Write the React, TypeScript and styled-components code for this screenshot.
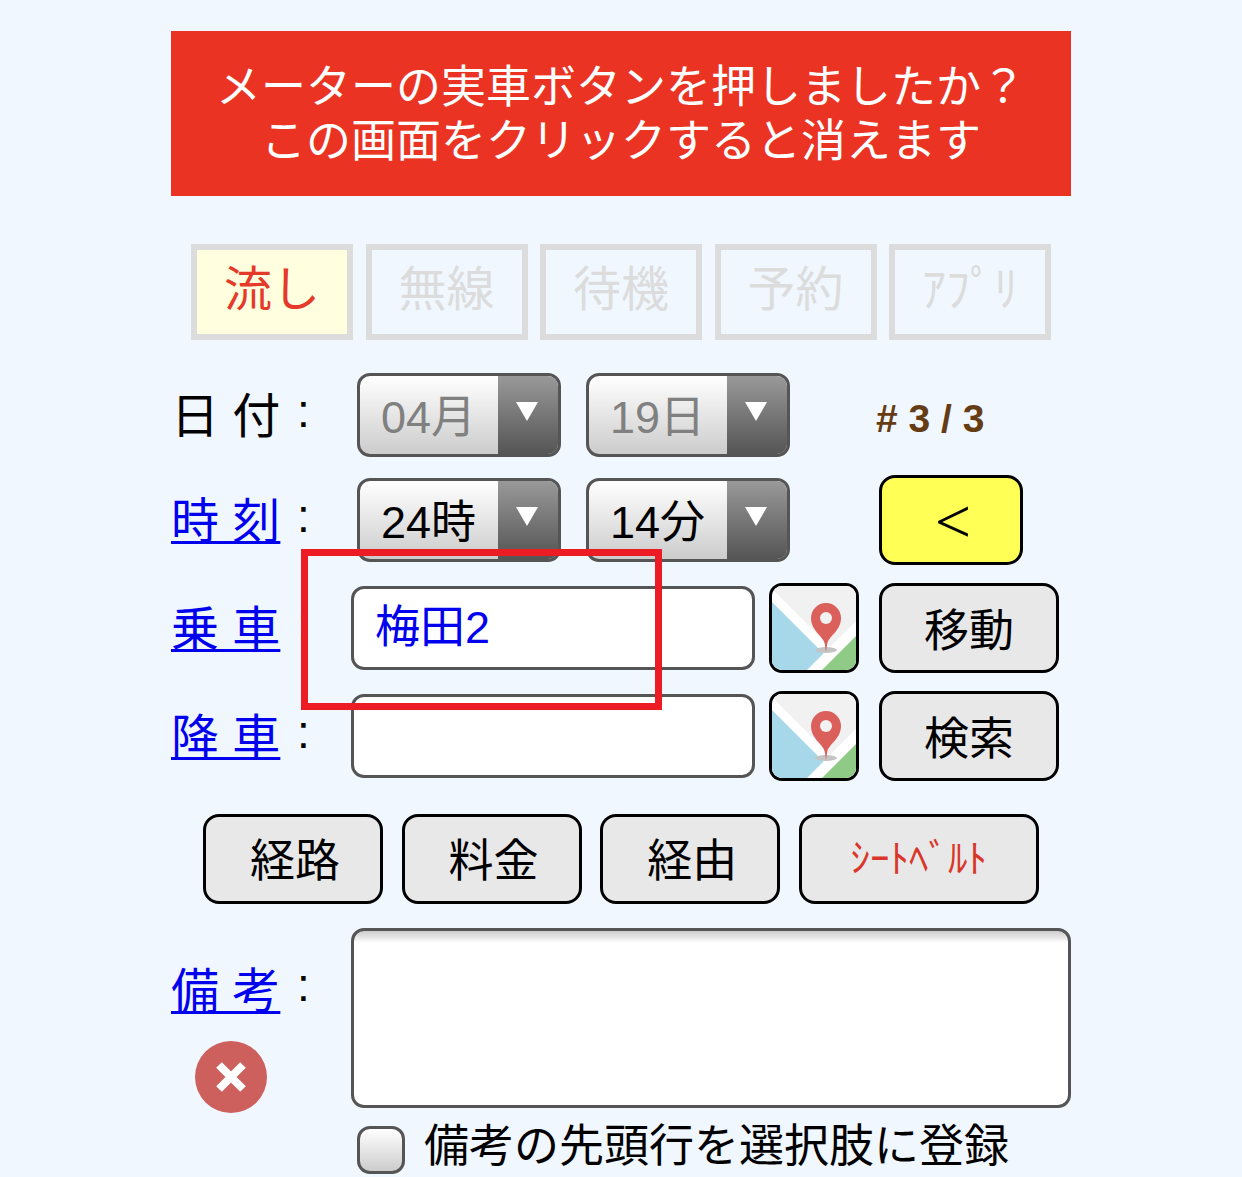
import styled, { createGlobalStyle } from "styled-components";

const GlobalStyle = createGlobalStyle`
  html, body {
    margin: 0;
    padding: 0;
    background: #f0f7ff;
    overflow: hidden;
  }
  * {
    box-sizing: border-box;
  }
`;

const Page = styled.div`
  position: relative;
  width: 1242px;
  height: 1177px;
  overflow: hidden;
  background: #f0f7ff;
  padding: 31px 171px 0;
  font-family: "Liberation Sans", "Noto Sans CJK JP", sans-serif;
  color: #000;
`;

const Banner = styled.div`
  width: 900px;
  height: 165px;
  padding-top: 2px;
  background: #eb3323;
  color: #fff;
  font-size: 45px;
  line-height: 54px;
  text-align: center;
  display: flex;
  flex-direction: column;
  justify-content: center;
`;

const TabRow = styled.div`
  display: flex;
  gap: 12.5px;
  margin: 48px 0 33px 20px;
`;

const Tab = styled.div<{ $active?: boolean }>`
  width: 162px;
  height: 96px;
  border: 6px solid #dcdcdc;
  padding-bottom: 14px;
  background: ${({ $active }) => ($active ? "#ffffe0" : "transparent")};
  color: ${({ $active }) => ($active ? "#e5392a" : "#dcdcdc")};
  font-size: 48px;
  display: flex;
  align-items: center;
  justify-content: center;
`;

const Rows = styled.div`
  display: flex;
  flex-direction: column;
  gap: 18px;
`;

const Row = styled.div<{ $height: number }>`
  display: flex;
  align-items: center;
  height: ${({ $height }) => $height}px;
`;

const Label = styled.div`
  width: 180px;
  flex-shrink: 0;
  padding-top: 4px;
  font-size: 48px;
  line-height: 56px;
  white-space: nowrap;
  display: flex;
  align-items: center;
`;

const LabelText = styled.span<{ $link?: boolean }>`
  display: inline-block;
  width: 109px;
  color: ${({ $link }) => ($link ? "#0000ee" : "#000")};
  text-decoration: ${({ $link }) => ($link ? "underline" : "none")};
  text-decoration-thickness: 3px;
  text-underline-offset: 3px;
`;

const Colon = styled.span`
  margin: 0 0 13px 17px;
  font-size: 46px;
  line-height: 1;
`;

const Select = styled.div<{ $muted?: boolean }>`
  position: relative;
  width: 204px;
  height: 84px;
  border: 3px solid #555;
  border-radius: 13px;
  overflow: hidden;
  background: linear-gradient(#fff, #ccc);
  color: ${({ $muted }) => ($muted ? "#808080" : "#000")};
  font-size: 45px;
  padding: 0 0 4px 21px;
  display: flex;
  align-items: center;
`;

const SelectArrow = styled.div`
  position: absolute;
  top: 0;
  right: 0;
  bottom: 0;
  width: 60px;
  background: linear-gradient(#999, #555);
  display: flex;
  justify-content: center;
  padding: 26px 2px 0 0;

  &::after {
    content: "";
    width: 0;
    height: 0;
    border-left: 11px solid transparent;
    border-right: 11px solid transparent;
    border-top: 19px solid #fff;
  }
`;

const SelectGroup = styled.div`
  display: flex;
  gap: 25px;
  margin-left: 6px;
`;

const Counter = styled.div`
  margin: 8px 0 0 86px;
  color: #663c14;
  font-size: 39px;
  font-weight: bold;
`;

const BackButton = styled.div`
  width: 144px;
  height: 90px;
  margin-left: 89px;
  padding-left: 4px;
  background: #ffff55;
  border: 3px solid #000;
  border-radius: 16px;
  font-family: "Noto Sans", sans-serif;
  font-weight: 300;
  font-size: 64px;
  display: flex;
  align-items: center;
  justify-content: center;
`;

const TextField = styled.div`
  width: 404px;
  height: 84px;
  border: 3px solid #555;
  border-radius: 13px;
  background: #fff;
  color: #0000ee;
  font-size: 45px;
  padding: 0 0 10px 21px;
  display: flex;
  align-items: center;
`;

const MapButton = styled.div`
  width: 90px;
  height: 90px;
  margin-left: 14px;
  border: 3px solid #000;
  border-radius: 13px;
  overflow: hidden;

  svg {
    display: block;
    width: 84px;
    height: 84px;
  }
`;

const ActionButton = styled.div<{ $width?: number; $red?: boolean }>`
  width: ${({ $width }) => $width ?? 180}px;
  height: 90px;
  flex-shrink: 0;
  border: 3px solid #000;
  border-radius: 16px;
  padding-bottom: 2px;
  background: #e8e8e8;
  color: ${({ $red }) => ($red ? "#d9372a" : "#000")};
  font-size: ${({ $red }) => ($red ? "39px" : "45px")};
  display: flex;
  align-items: center;
  justify-content: center;
`;

const SideButton = styled(ActionButton)`
  margin-left: 20px;
`;

const RouteButton = styled(ActionButton)<{ $red?: boolean }>`
  padding: 0 0 ${({ $red }) => ($red ? "8px" : "4px")} ${({ $red }) => ($red ? "0" : "4px")};
`;

const ButtonRow = styled.div`
  display: flex;
  gap: 18.6px;
  margin: 33px 0 24px 32px;
`;

const NotesRow = styled.div`
  display: flex;
  height: 180px;
`;

const NotesLabel = styled.div`
  width: 180px;
  flex-shrink: 0;
  padding-top: 30px;
`;

const ClearIcon = styled.div`
  width: 72px;
  height: 72px;
  margin: 20px 0 0 24px;
  border-radius: 50%;
  background: #cd5f5c;
  display: flex;
  align-items: center;
  justify-content: center;
`;

const TextArea = styled.div`
  width: 720px;
  height: 180px;
  border: 3px solid #555;
  border-radius: 13px;
  background: linear-gradient(#ccc, #fff 12px);
`;

const CheckRow = styled.div`
  display: flex;
  align-items: flex-start;
  gap: 19px;
  margin: 18px 0 0 186px;
  font-size: 45px;
  white-space: nowrap;
`;

const CheckBox = styled.div`
  width: 48px;
  height: 48px;
  border: 3px solid #555;
  border-radius: 13px;
  background: linear-gradient(#fff, #ccc);
`;

const CheckText = styled.span`
  line-height: 48px;
  margin-top: -3px;
`;

const RedFrame = styled.div`
  position: absolute;
  left: 301px;
  top: 549px;
  width: 361px;
  height: 161px;
  border: 7px solid #ed1c24;
`;

const MapIcon = () => (
  <svg viewBox="0 0 84 84">
    <rect width="84" height="84" fill="#fff" />
    <polygon points="0,0 84,0 84,35 58,61 0,3" fill="#f1f1f1" />
    <polygon points="0,16 51.5,67.5 35,84 0,84" fill="#a6d8e9" />
    <polygon points="84,50 84,84 50,84" fill="#8fcb86" />
    <ellipse cx="54" cy="64" rx="11" ry="3" fill="#c4c4c4" />
    <path
      d="M54 66L52.8 58C51.5 50 39 45 39 32a15 15 0 0 1 30 0C69 45 56.5 50 55.2 58Z"
      fill="#db5f5a"
    />
    <circle cx="54" cy="32" r="6" fill="#f1f1f1" />
  </svg>
);

const ClearGlyph = () => (
  <svg width="34" height="34" viewBox="0 0 34 34">
    <path d="M5 5L29 29M29 5L5 29" stroke="#fff" strokeWidth="8" />
  </svg>
);

const App = () => {
  return (
    <Page>
      <GlobalStyle />
      <Banner>
        <div>メーターの実車ボタンを押しましたか？</div>
        <div>この画面をクリックすると消えます</div>
      </Banner>

      <TabRow>
        <Tab $active>流し</Tab>
        <Tab>無線</Tab>
        <Tab>待機</Tab>
        <Tab>予約</Tab>
        <Tab>ｱﾌﾟﾘ</Tab>
      </TabRow>

      <Rows>
        <Row $height={84}>
          <Label>
            <LabelText>日 付</LabelText>
            <Colon>:</Colon>
          </Label>
          <SelectGroup>
            <Select $muted>
              04月
              <SelectArrow />
            </Select>
            <Select $muted>
              19日
              <SelectArrow />
            </Select>
          </SelectGroup>
          <Counter># 3 / 3</Counter>
        </Row>

        <Row $height={90}>
          <Label>
            <LabelText $link>時 刻</LabelText>
            <Colon>:</Colon>
          </Label>
          <SelectGroup>
            <Select>
              24時
              <SelectArrow />
            </Select>
            <Select>
              14分
              <SelectArrow />
            </Select>
          </SelectGroup>
          <BackButton>&lt;</BackButton>
        </Row>

        <Row $height={90}>
          <Label>
            <LabelText $link>乗 車</LabelText>
            <Colon>:</Colon>
          </Label>
          <TextField>梅田2</TextField>
          <MapButton>
            <MapIcon />
          </MapButton>
          <SideButton>移動</SideButton>
        </Row>

        <Row $height={90}>
          <Label>
            <LabelText $link>降 車</LabelText>
            <Colon>:</Colon>
          </Label>
          <TextField />
          <MapButton>
            <MapIcon />
          </MapButton>
          <SideButton>検索</SideButton>
        </Row>
      </Rows>

      <ButtonRow>
        <RouteButton>経路</RouteButton>
        <RouteButton>料金</RouteButton>
        <RouteButton>経由</RouteButton>
        <RouteButton $width={240} $red>
          ｼｰﾄﾍﾞﾙﾄ
        </RouteButton>
      </ButtonRow>

      <NotesRow>
        <NotesLabel>
          <Label>
            <LabelText $link>備 考</LabelText>
            <Colon>:</Colon>
          </Label>
          <ClearIcon>
            <ClearGlyph />
          </ClearIcon>
        </NotesLabel>
        <TextArea />
      </NotesRow>

      <CheckRow>
        <CheckBox />
        <CheckText>備考の先頭行を選択肢に登録</CheckText>
      </CheckRow>

      <RedFrame />
    </Page>
  );
};

export default App;
